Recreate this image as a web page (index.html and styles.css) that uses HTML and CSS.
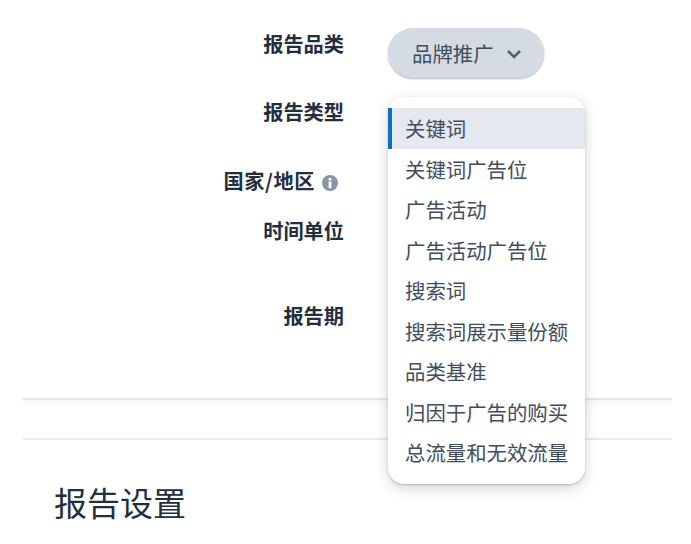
FILE: index.html
```html
<!DOCTYPE html>
<html lang="zh-CN">

<head>
    <meta charset="UTF-8">
    <title>报告设置</title>
    <link rel="stylesheet" href="styles.css">
</head>

<body>
    <div class="form">
        <div class="row row-category">
            <div class="label">报告品类</div>
            <div class="control">
                <button class="select-btn" type="button">
                    品牌推广
                    <svg class="chevron" viewBox="0 0 16 10" width="16" height="10" aria-hidden="true">
                        <path d="M2 2l6 6 6-6" fill="none" stroke="currentColor" stroke-width="2.6"/>
                    </svg>
                </button>
            </div>
        </div>

        <div class="row row-type">
            <div class="label">报告类型</div>
            <div class="control">
                <ul class="menu">
                    <li class="menu-item selected">关键词</li>
                    <li class="menu-item">关键词广告位</li>
                    <li class="menu-item">广告活动</li>
                    <li class="menu-item">广告活动广告位</li>
                    <li class="menu-item">搜索词</li>
                    <li class="menu-item">搜索词展示量份额</li>
                    <li class="menu-item">品类基准</li>
                    <li class="menu-item">归因于广告的购买</li>
                    <li class="menu-item">总流量和无效流量</li>
                </ul>
            </div>
        </div>

        <div class="row row-country">
            <div class="label label-info">
                国家/地区
                <svg class="info-icon" viewBox="0 0 16 16" width="16" height="16" aria-hidden="true">
                    <circle cx="8" cy="8" r="8" fill="#8995a7"/>
                    <circle cx="8" cy="4.2" r="1.5" fill="#fff"/>
                    <rect x="6.6" y="6.6" width="2.8" height="6.6" fill="#fff"/>
                </svg>
            </div>
        </div>

        <div class="row row-unit">
            <div class="label">时间单位</div>
        </div>

        <div class="row row-period">
            <div class="label">报告期</div>
        </div>
    </div>

    <div class="divider"></div>

    <h2 class="section-title">报告设置</h2>
</body>

</html>
```

FILE: styles.css
```css
body {
    margin: 0;
    height: 544px;
    overflow: hidden;
    background: #fff;
    font-family: "Noto Sans CJK SC", "Noto Sans", sans-serif;
    color: #232f3e;
}

.form {
    padding-top: 30px;
}

.row {
    display: grid;
    grid-template-columns: 344px 1fr;
    column-gap: 44px;
    align-items: start;
}

.row-category {
    height: 68px;
}

.row-type {
    height: 69px;
}

.row-country {
    height: 50px;
}

.row-unit {
    height: 85px;
}

.row-period {
    height: 96px;
}

.label {
    font-size: 20.2px;
    line-height: 28px;
    font-weight: 700;
    text-align: right;
}

.label-info {
    display: flex;
    justify-content: flex-end;
    align-items: center;
    gap: 7px;
    padding-right: 6px;
    letter-spacing: 0.6px;
}

.info-icon {
    margin-top: 4px;
}

.control {
    position: relative;
}

.select-btn {
    display: flex;
    align-items: center;
    gap: 12px;
    height: 50px;
    margin-top: -2px;
    padding: 0 22px 0 24px;
    border: none;
    border-radius: 25px;
    background: #d5dbe3;
    box-shadow: 0 1px 2px rgba(35, 47, 62, 0.35);
    font-family: inherit;
    font-size: 20.4px;
    color: #414d5c;
}

.chevron {
    color: #545f6e;
    margin-top: 2px;
}

.menu {
    position: absolute;
    top: -1px;
    left: 0;
    width: 197px;
    box-sizing: border-box;
    margin: 0;
    padding: 11px 0 11.5px;
    list-style: none;
    background: #fff;
    border-radius: 16px;
    box-shadow: 0 1px 2px rgba(35, 47, 62, 0.25), 0 4px 14px rgba(35, 47, 62, 0.2);
}

.menu-item {
    height: 40.5px;
    padding-left: 17px;
    font-size: 20.4px;
    line-height: 40.8px;
    color: #414d5c;
    white-space: nowrap;
}

.menu-item.selected {
    padding-left: 13px;
    border-left: 4px solid #0972c1;
    background: #e5e8ee;
}

.divider {
    height: 38px;
    margin: 0 19px 0 23px;
    border-top: 2px solid #e4e6ea;
    border-bottom: 2px solid #e8eaed;
    background: linear-gradient(#f9f9fa, #fff 10px);
}

.section-title {
    margin: 38px 0 0 54px;
    font-size: 33px;
    line-height: 48px;
    font-weight: 400;
    color: #232f3e;
}
```
